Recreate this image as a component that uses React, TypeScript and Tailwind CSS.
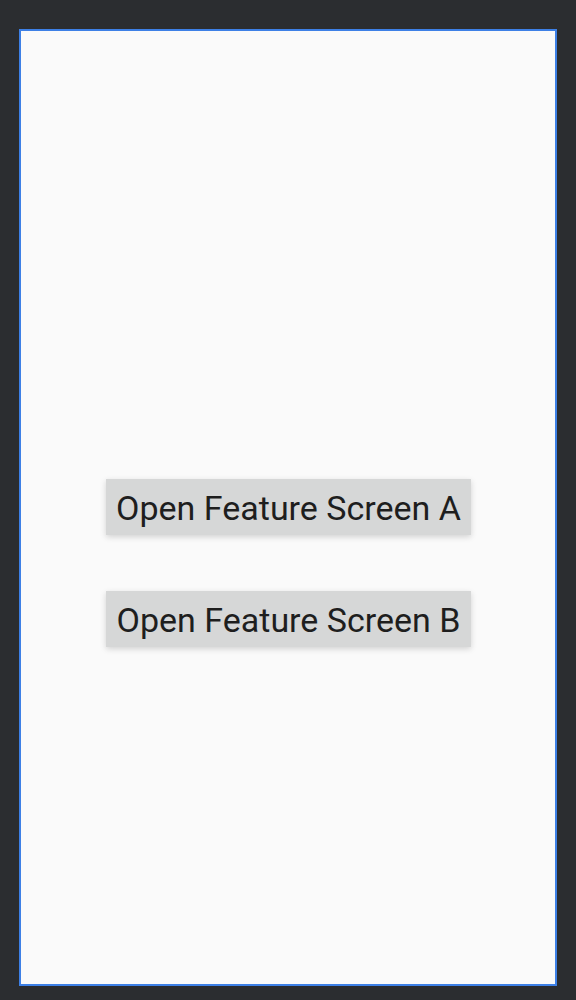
import React from "react";

const FeatureButton: React.FC<{ label: string }> = ({ label }) => (
  <button
    type="button"
    className="h-[56px] w-[365px] bg-[#d6d7d7] pt-[2px] text-[34px] leading-none text-[#1e1e1e] shadow-[0_2px_6px_rgba(0,0,0,0.16)]"
    style={{ fontFamily: "Roboto, 'Liberation Sans', sans-serif" }}
  >
    {label}
  </button>
);

export default function App() {
  return (
    <div className="h-[1000px] w-[576px] bg-[#2b2d30] pl-[19px] pt-[29px]">
      <div className="flex h-[957px] w-[538px] flex-col items-center gap-[56px] border-2 border-[#3d80e6] bg-[#fafafa] pl-[1px] pt-[448px]">
        <FeatureButton label="Open Feature Screen A" />
        <FeatureButton label="Open Feature Screen B" />
      </div>
    </div>
  );
}
